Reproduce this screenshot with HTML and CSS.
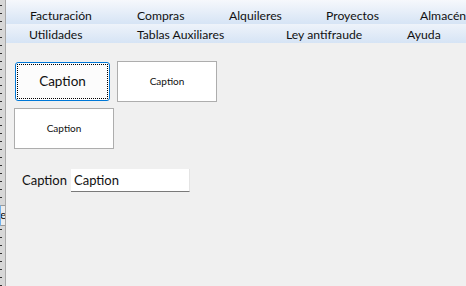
FILE: index.html
```html
<!DOCTYPE html>
<html lang="es">
<head>
  <meta charset="UTF-8" />
  <title>Formulario</title>
  <link rel="stylesheet" href="styles.css">
</head>
<body>
  <div class="frame">
    <div class="ruler">
      <div class="ruler-tab"><span>e</span></div>
    </div>
    <div class="main">
      <nav class="menu">
        <ul class="menu-row row-1">
          <li>Facturación</li>
          <li>Compras</li>
          <li>Alquileres</li>
          <li>Proyectos</li>
          <li>Almacén</li>
        </ul>
        <ul class="menu-row row-2">
          <li>Utilidades</li>
          <li>Tablas Auxiliares</li>
          <li>Ley antifraude</li>
          <li>Ayuda</li>
        </ul>
      </nav>

      <div class="content">
        <div class="btn-row">
          <button class="btn btn-focus"><span class="focus-ring">Caption</span></button>
          <button class="btn btn-small btn-second">Caption</button>
        </div>
        <button class="btn btn-small btn-third">Caption</button>

        <div class="field">
          <label for="campo">Caption</label>
          <input type="text" id="campo" value="Caption" />
        </div>
      </div>
    </div>
  </div>
</body>
</html>
```

FILE: styles.css
```css
* {
  box-sizing: border-box;
  font-family: 'Lato', 'Liberation Sans', sans-serif;
}

body {
  margin: 0;
  background: #f0f0f0;
  overflow: hidden;
}

.frame {
  display: flex;
  height: 286px;
}

/* tira gris de la izquierda con puntos */
.ruler {
  width: 6px;
  flex: none;
  background-color: #d7d7d7;
  background-image: linear-gradient(#2e2e2e 0 1px, transparent 1px);
  background-size: 2px 8px;
  background-position: 0 5px;
  background-repeat: repeat-y;
  border-right: 1px solid #a9a9a9;
  padding-top: 205px;
}

.ruler-tab {
  height: 21px;
  border-top: 1px solid #9a9a9a;
  border-bottom: 1px solid #9a9a9a;
  background: #ececec;
  border-left: 1px solid #6fb3f0;
  overflow: hidden;
  font-size: 12px;
  line-height: 18px;
  color: #111;
}

.ruler-tab span {
  display: block;
  margin-left: -1px;
}

.main {
  flex: 1;
  display: flex;
  flex-direction: column;
}

.menu-row {
  display: grid;
  margin: 0;
  padding: 0;
  list-style: none;
  font-size: 12.2px;
  line-height: 15px;
  color: #111;
  white-space: nowrap;
  overflow: hidden;
}

.row-1 {
  height: 24px;
  padding: 8px 0 0 24px;
  grid-template-columns: 107px 92px 97px 94px 60px;
  background: linear-gradient(#f6f8fc, #d6e4f5);
}

.row-2 {
  height: 19px;
  padding: 3px 0 0 23px;
  grid-template-columns: 108px 149px 121px 60px;
  background: linear-gradient(#eef3fa, #d6e4f5);
}

.content {
  padding: 18px 0 0 8px;
  display: flex;
  flex-direction: column;
  align-items: flex-start;
}

.btn-row {
  display: flex;
  align-items: flex-start;
}

.btn {
  background: #fff;
  border: 1px solid #adadad;
  color: #111;
  padding: 0;
  font-size: 10px;
  cursor: pointer;
}

.btn-focus {
  width: 95px;
  height: 39px;
  margin: 1px 0 0 1px;
  border: 1px solid #0078d7;
  border-radius: 3px;
  background: #fcfcfc;
  font-size: 13.5px;
  padding: 1px;
}

.focus-ring {
  display: flex;
  align-items: center;
  justify-content: center;
  height: 100%;
  border: 1px dotted #000;
  padding-bottom: 2px;
}

.btn-small {
  width: 100px;
  height: 41px;
  padding-bottom: 2px;
}

.btn-second {
  margin-left: 7px;
}

.btn-third {
  margin-top: 6px;
}

.field {
  display: flex;
  align-items: center;
  margin: 20px 0 0 8px;
  font-size: 13px;
  color: #111;
}

.field label {
  width: 49px;
  padding-bottom: 1px;
}

.field input {
  width: 119px;
  height: 23px;
  margin: 0;
  padding: 0 3px 1px;
  border: none;
  border-right: 1px solid #e4e4e4;
  border-bottom: 1px solid #7a7a7a;
  background: #fff;
  font-size: 13px;
  color: #111;
}
```
